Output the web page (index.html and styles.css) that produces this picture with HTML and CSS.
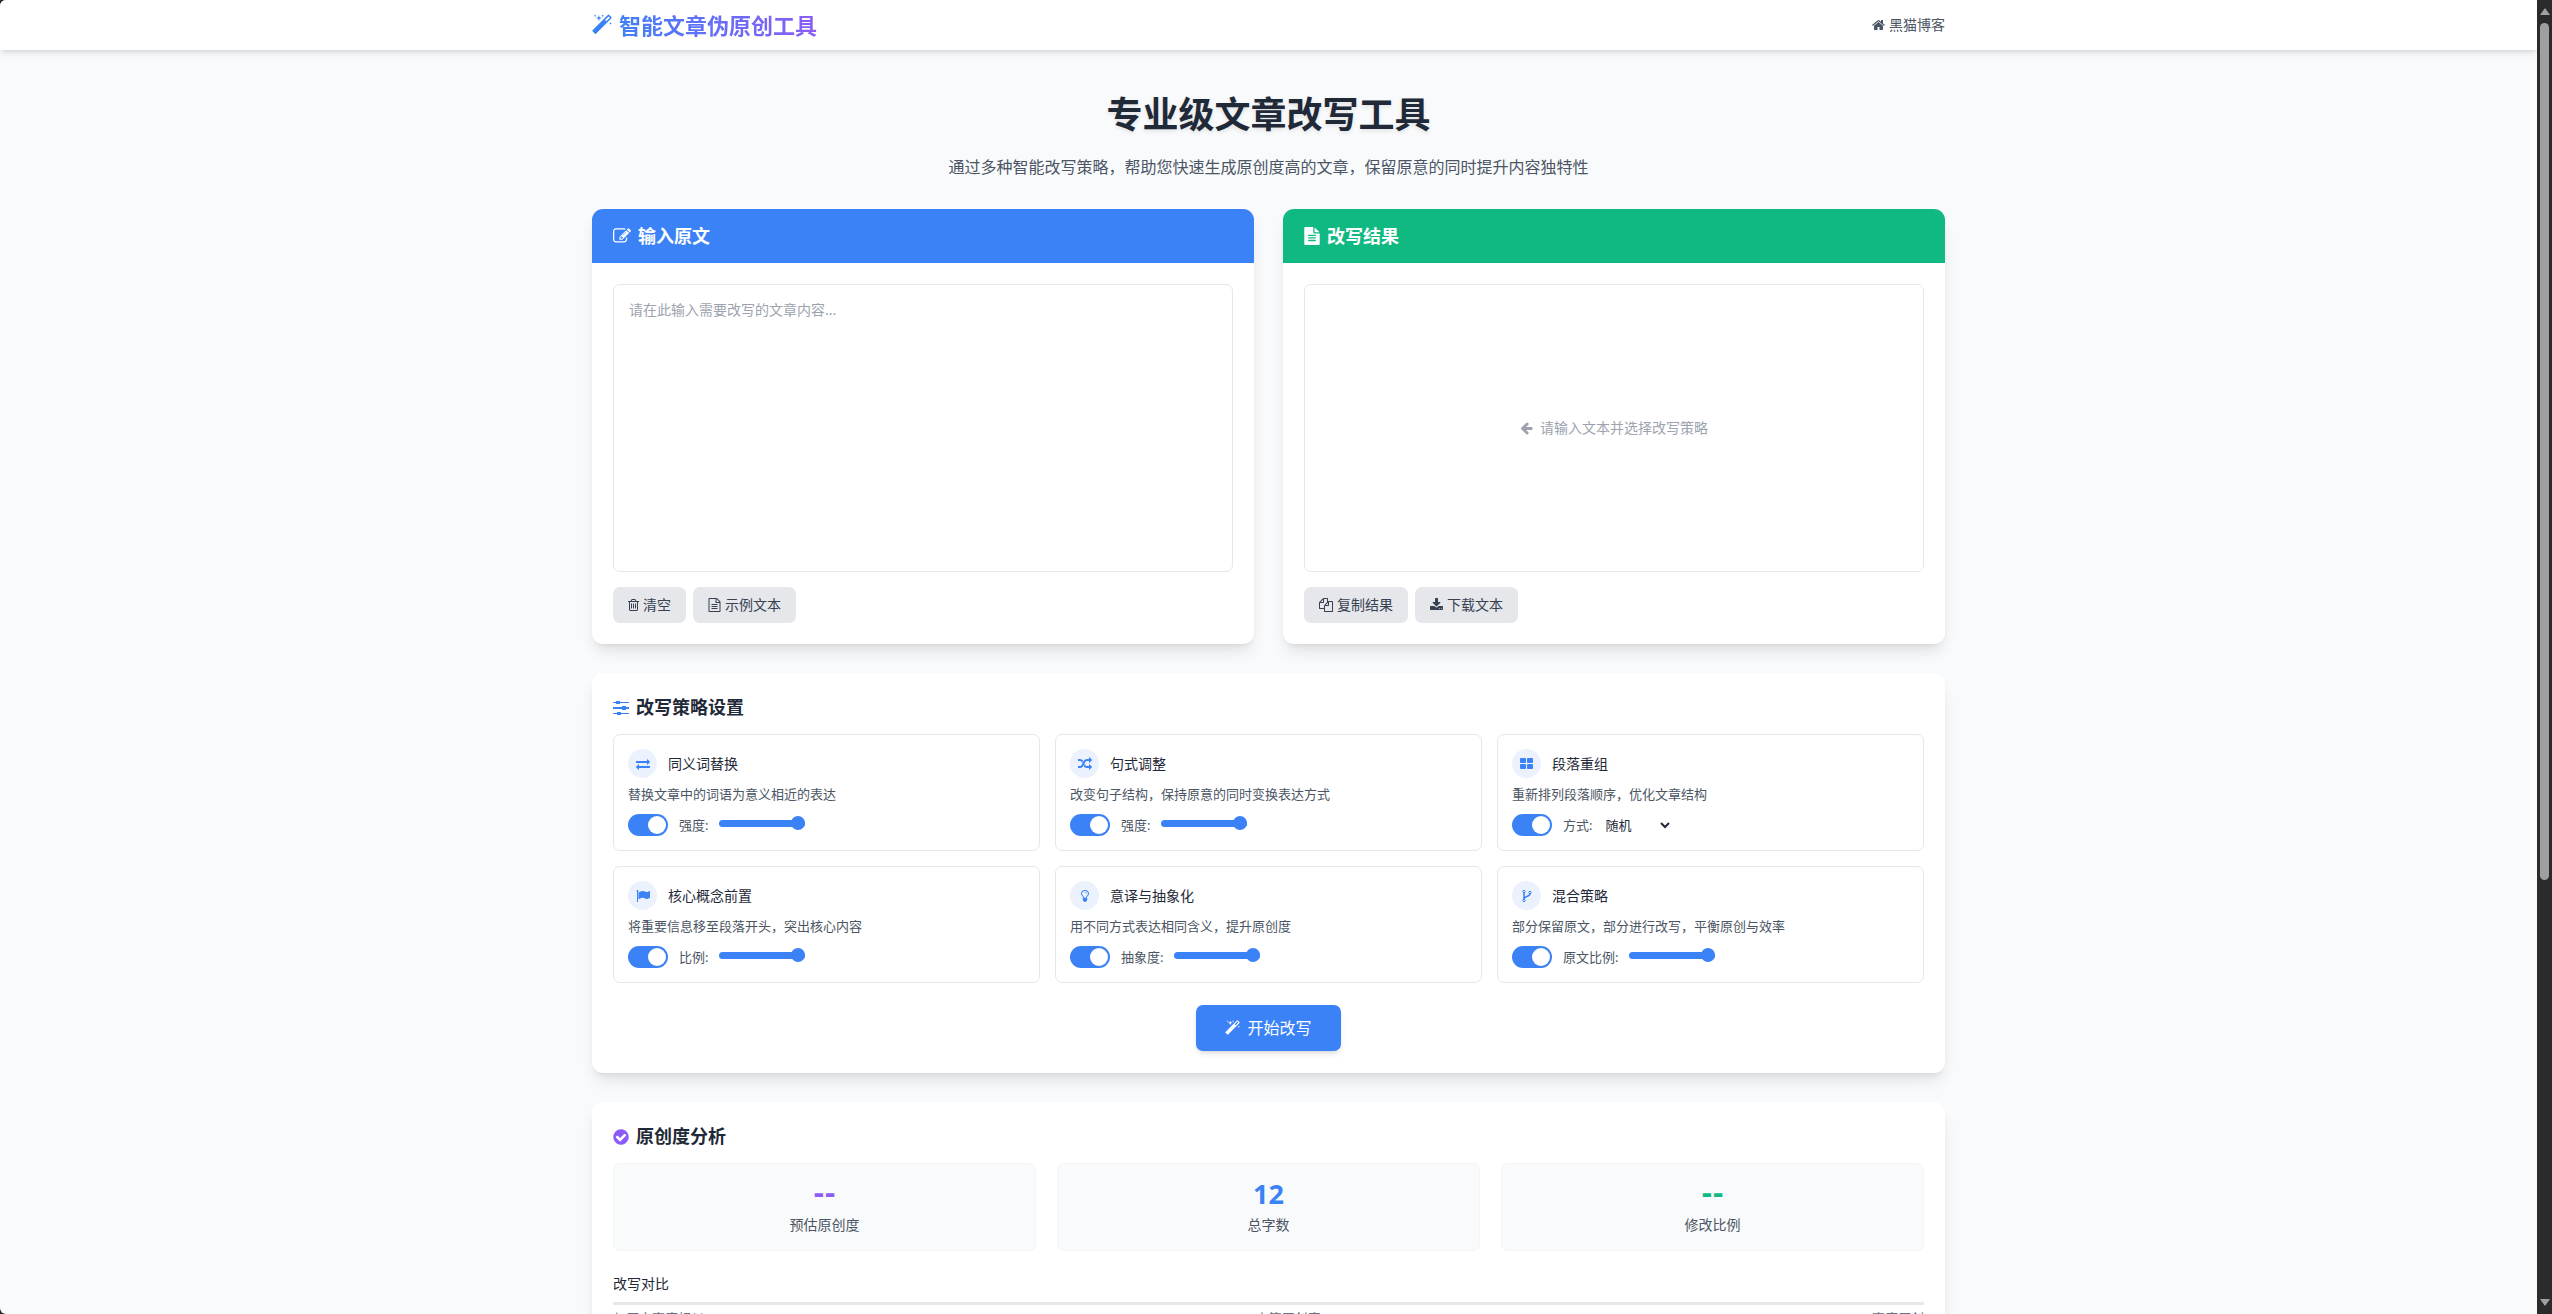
FILE: index.html
```html
<!DOCTYPE html>
<html lang="zh-CN">
<head>
<meta charset="UTF-8">
<meta name="viewport" content="width=device-width, initial-scale=1">
<title>智能文章伪原创工具</title>
<link rel="stylesheet" href="styles.css">
</head>
<body>
<svg class="sprite" aria-hidden="true">
  <defs>
    <symbol id="magic" viewBox="64 0 1664 1792"><path d="M1254 581l293-293-107-107-293 293zm447-293q0 27-18 45l-1286 1286q-18 18-45 18t-45-18l-198-198q-18-18-18-45t18-45l1286-1286q18-18 45-18t45 18l198 198q18 18 18 45zm-1351-190l98 30-98 30-30 98-30-98-98-30 98-30 30-98zm350 162l196 60-196 60-60 196-60-196-196-60 196-60 60-196zm930 478l98 30-98 30-30 98-30-98-98-30 98-30 30-98zm-640-640l98 30-98 30-30 98-30-98-98-30 98-30 30-98z"/></symbol>
    <symbol id="home" viewBox="64 0 1664 1792"><path d="M1472 992v480q0 26-19 45t-45 19h-384v-384h-256v384h-384q-26 0-45-19t-19-45v-480q0-1 .5-3t.5-3l575-474 575 474q1 2 1 6zm223-69l-62 74q-8 9-21 11h-3q-13 0-21-7l-692-577-692 577q-12 8-24 7-13-2-21-11l-62-74q-8-10-7-23.500t11-21.500l719-599q32-26 76-26t76 26l244 204v-195q0-14 9-23t23-9h192q14 0 23 9t9 23v408l219 182q10 8 11 21.500t-7 23.500z"/></symbol>
    <symbol id="edit" viewBox="0 0 1792 1792"><path d="M888 1184l116-116-152-152-116 116v56h96v96h56zm440-720q-16-16-33 1l-350 350q-17 17-1 33t33-1l350-350q17-17 1-33zm80 594v190q0 119-84.500 203.500t-203.500 84.500h-832q-119 0-203.500-84.500t-84.500-203.500v-832q0-119 84.500-203.500t203.500-84.500h832q63 0 117 25 15 7 18 23 3 17-9 29l-49 49q-14 14-32 8-23-6-45-6h-832q-66 0-113 47t-47 113v832q0 66 47 113t113 47h832q66 0 113-47t47-113v-126q0-13 9-22l64-64q15-15 35-7t20 29zm-96-738l288 288-672 672h-288v-288zm444 132l-92 92-288-288 92-92q28-28 68-28t68 28l152 152q28 28 28 68t-28 68z"/></symbol>
    <symbol id="file" viewBox="128 0 1536 1792"><path d="M1596 476q14 14 28 36h-472v-472q22 14 36 28zm-476 164h544v1056q0 40-28 68t-68 28h-1344q-40 0-68-28t-28-68v-1600q0-40 28-68t68-28h800v544q0 40 28 68t68 28zm160 736v-64q0-14-9-23t-23-9h-704q-14 0-23 9t-9 23v64q0 14 9 23t23 9h704q14 0 23-9t9-23zm0-256v-64q0-14-9-23t-23-9h-704q-14 0-23 9t-9 23v64q0 14 9 23t23 9h704q14 0 23-9t9-23zm0-256v-64q0-14-9-23t-23-9h-704q-14 0-23 9t-9 23v64q0 14 9 23t23 9h704q14 0 23-9t9-23z"/></symbol>
    <symbol id="file-o" viewBox="128 0 1536 1792"><path d="M1596 380q28 28 48 76t20 88v1152q0 40-28 68t-68 28h-1344q-40 0-68-28t-28-68v-1600q0-40 28-68t68-28h896q40 0 88 20t76 48zm-444-244v376h376q-10-29-22-41l-313-313q-12-12-41-22zm384 1528v-1024h-416q-40 0-68-28t-28-68v-416h-768v1536h1280zm-1024-864q0-14 9-23t23-9h704q14 0 23 9t9 23v64q0 14-9 23t-23 9h-704q-14 0-23-9t-9-23v-64zm736 224q14 0 23 9t9 23v64q0 14-9 23t-23 9h-704q-14 0-23-9t-9-23v-64q0-14 9-23t23-9h704zm0 256q14 0 23 9t9 23v64q0 14-9 23t-23 9h-704q-14 0-23-9t-9-23v-64q0-14 9-23t23-9h704z"/></symbol>
    <symbol id="trash" viewBox="192 0 1408 1792"><path d="M704 736v576q0 14-9 23t-23 9h-64q-14 0-23-9t-9-23v-576q0-14 9-23t23-9h64q14 0 23 9t9 23zm256 0v576q0 14-9 23t-23 9h-64q-14 0-23-9t-9-23v-576q0-14 9-23t23-9h64q14 0 23 9t9 23zm256 0v576q0 14-9 23t-23 9h-64q-14 0-23-9t-9-23v-576q0-14 9-23t23-9h64q14 0 23 9t9 23zm128 724v-948h-896v948q0 22 7 40.500t14.500 27 10.500 8.500h832q3 0 10.500-8.500t14.500-27 7-40.500zm-672-1076h448l-48-117q-7-9-17-11h-317q-10 2-17 11zm928 32v64q0 14-9 23t-23 9h-96v948q0 83-47 143.500t-113 60.500h-832q-66 0-113-58.500t-47-141.500v-952h-96q-14 0-23-9t-9-23v-64q0-14 9-23t23-9h309l70-167q15-37 54-63t79-26h320q40 0 79 26t54 63l70 167h309q14 0 23 9t9 23z"/></symbol>
    <symbol id="copy" viewBox="0 0 1792 1792"><path d="M1696 384q40 0 68 28t28 68v1216q0 40-28 68t-68 28h-960q-40 0-68-28t-28-68v-288h-544q-40 0-68-28t-28-68v-672q0-40 20-88t48-76l408-408q28-28 76-48t88-20h416q40 0 68 28t28 68v328q68-40 128-40h416zm-544 213l-299 299h299v-299zm-640-384l-299 299h299v-299zm196 647l316-316v-416h-384v416q0 40-28 68t-68 28h-416v640h512v-256q0-40 20-88t48-76zm956 804v-1152h-384v416q0 40-28 68t-68 28h-416v640h896z"/></symbol>
    <symbol id="download" viewBox="64 0 1664 1792"><path d="M1344 1344q0-26-19-45t-45-19-45 19-19 45 19 45 45 19 45-19 19-45zm256 0q0-26-19-45t-45-19-45 19-19 45 19 45 45 19 45-19 19-45zm128-224v320q0 40-28 68t-68 28h-1472q-40 0-68-28t-28-68v-320q0-40 28-68t68-28h465l135 136q58 56 136 56t136-56l136-136h464q40 0 68 28t28 68zm-325-569q17 41-14 70l-448 448q-18 19-45 19t-45-19l-448-448q-31-29-14-70 17-39 59-39h256v-448q0-26 19-45t45-19h256q26 0 45 19t19 45v448h256q42 0 59 39z"/></symbol>
    <symbol id="arrow-left" viewBox="128 0 1536 1792"><path d="M1664 896v128q0 53-32.500 90.500t-84.500 37.500h-704l293 294q38 36 38 90t-38 90l-75 76q-37 37-90 37-52 0-91-37l-651-652q-37-37-37-90 0-52 37-91l651-650q38-38 91-38 52 0 90 38l75 74q38 38 38 91t-38 91l-293 293h704q52 0 84.500 37.500t32.500 90.500z"/></symbol>
    <symbol id="sliders" viewBox="0 0 16 18"><path d="M0 3h3v1H0zM7 3h9v1H7zM3 2h4v3H3zM0 8h9v2H0zM13 8h3v2h-3zM9 7h4v4H9zM0 14h4v1H0zM8 14h8v1H8zM4 13h4v3H4z"/></symbol>
    <symbol id="exchange" viewBox="0 0 1792 1792"><path d="M1792 1184v192q0 13-9.500 22.500t-22.500 9.500h-1376v192q0 13-9.500 22.500t-22.500 9.500q-12 0-24-10l-319-320q-9-9-9-22 0-14 9-23l320-320q9-9 23-9 13 0 22.500 9.500t9.500 22.500v192h1376q13 0 22.500 9.500t9.500 22.500zm0-544q0 14-9 23l-320 320q-9 9-23 9-13 0-22.500-9.500t-9.500-22.500v-192h-1376q-13 0-22.500-9.500t-9.500-22.500v-192q0-13 9.500-22.500t22.500-9.500h1376v-192q0-14 9-23t23-9q12 0 24 10l319 319q9 9 9 23z"/></symbol>
    <symbol id="random" viewBox="0 0 1792 1792"><path d="M666 481q-60 92-137 273-22-45-37-72.500t-40.500-63.500-51-56.500-63-35-81.500-14.500h-224q-14 0-23-9t-9-23v-192q0-14 9-23t23-9h224q250 0 410 225zm1126 799q0 14-9 23l-320 320q-9 9-23 9-13 0-22.500-9.500t-9.500-22.500v-192q-32 0-85 .5t-81 1-73-1-71-5-64-10.500-63-18.500-58-28.500-59-40-55-53.500-56-69.500q59-93 136-273 22 45 37 72.500t40.500 63.500 51 56.500 63 35 81.500 14.500h256v-192q0-14 9-23t23-9q12 0 24 10l319 319q9 9 9 23zm0-896q0 14-9 23l-320 320q-9 9-23 9-13 0-22.500-9.500t-9.500-22.500v-192h-256q-48 0-87 15t-69 45-51 61.500-45 77.500q-32 62-78 171-29 66-49.500 111t-54 105-64 100-74 83-90 68.500-106.500 42-128 16.500h-224q-14 0-23-9t-9-23v-192q0-14 9-23t23-9h224q48 0 87-15t69-45 51-61.500 45-77.500q32-62 78-171 29-66 49.500-111t54-105 64-100 74-83 90-68.500 106.500-42 128-16.500h256v-192q0-14 9-23t23-9q12 0 24 10l319 319q9 9 9 23z"/></symbol>
    <symbol id="th-large" viewBox="0 0 14 14"><rect x="0" y="1" width="6" height="5" rx="1"/><rect x="7" y="1" width="6" height="5" rx="1"/><rect x="0" y="7" width="6" height="5" rx="1"/><rect x="7" y="7" width="6" height="5" rx="1"/></symbol>
    <symbol id="flag" viewBox="0 0 1792 1792"><path d="M320 256q0 72-64 110v1266q0 13-9.500 22.500t-22.500 9.500h-64q-13 0-22.500-9.500t-9.500-22.500v-1266q-64-38-64-110 0-53 37.500-90.500t90.500-37.500 90.500 37.500 37.500 90.500zm1472 64v763q0 25-12.500 38.500t-39.500 27.500q-215 116-369 116-61 0-123.500-22t-108.500-48-115.500-48-142.500-22q-192 0-464 146-17 9-33 9-26 0-45-19t-19-45v-742q0-32 31-55 21-14 79-43 236-120 421-120 107 0 200 29t219 88q38 19 88 19 54 0 117.500-21t110-47 88-47 54.500-21q26 0 45 19t19 45z"/></symbol>
    <symbol id="bulb" viewBox="0 0 1792 1792"><path d="M1120 576q0 13-9.500 22.500t-22.500 9.500-22.500-9.500-9.500-22.500q0-46-54-71t-106-25q-13 0-22.500-9.500t-9.500-22.500 9.500-22.500 22.500-9.500q50 0 99.500 16t87 54 37.500 90zm160 0q0-72-34.500-134t-90-101.500-123-62-136.500-22.500-136.500 22.500-123 62-90 101.500-34.500 134q0 101 68 180 10 11 30.500 33t30.500 33q128 153 141 298h228q13-145 141-298 10-11 30.500-33t30.500-33q68-79 68-180zm128 0q0 155-103 268-45 49-74.500 87t-59.500 95.500-34 107.500q47 28 47 82 0 37-25 64 25 27 25 64 0 52-45 81 13 23 13 47 0 46-31.500 71t-77.500 25q-20 44-60 70t-87 26-87-26-60-70q-46 0-77.500-25t-31.500-71q0-24 13-47-45-29-45-81 0-37 25-64-25-27-25-64 0-54 47-82-4-50-34-107.500t-59.500-95.500-74.500-87q-103-113-103-268 0-99 44.500-184.500t117-142 164-89 186.500-32.500 186.500 32.500 164 89 117 142 44.500 184.500z"/></symbol>
    <symbol id="fork" viewBox="0 0 14 14"><g fill="none" stroke="currentColor"><circle cx="4" cy="2.500" r="1.200"/><circle cx="4" cy="11.500" r="1.200"/><circle cx="10" cy="3.500" r="1.200"/><path stroke-width="1.600" d="M4 3.700v6.600M10 4.700c0 3.300-6 2.300-6 5.300"/></g></symbol>
    <symbol id="check" viewBox="128 0 1536 1792"><path d="M1412 734q0-28-18-46l-91-90q-19-19-45-19t-45 19l-408 407-226-226q-19-19-45-19t-45 19l-91 90q-18 18-18 46 0 27 18 45l362 362q19 19 45 19 27 0 46-19l543-543q18-18 18-45zm252 162q0 209-103 385.500t-279.500 279.500-385.500 103-385.500-103-279.500-279.500-103-385.500 103-385.500 279.500-279.500 385.500-103 385.500 103 279.500 279.500 103 385.500z"/></symbol>
    <symbol id="chevron" viewBox="0 0 10 10"><path d="M1 3l4 4 4-4" fill="none" stroke="currentColor" stroke-width="2"/></symbol>
  </defs>
</svg>
<div class="viewport">
  <div class="page">
    <header class="topbar">
      <div class="container topbar-row">
        <div class="brand"><svg class="icon-brand tint-blue"><use href="#magic"/></svg><span class="brand-name">智能文章伪原创工具</span></div>
        <nav><a class="nav-link" href="#"><svg class="icon-sm"><use href="#home"/></svg>黑猫博客</a></nav>
      </div>
    </header>
    <main class="container content">
      <section class="hero">
        <h1>专业级文章改写工具</h1>
        <p>通过多种智能改写策略，帮助您快速生成原创度高的文章，保留原意的同时提升内容独特性</p>
      </section>

      <div class="editors">
        <section class="card">
          <h2 class="card-head blue"><svg class="icon-wide"><use href="#edit"/></svg><label for="source">输入原文</label></h2>
          <div class="card-body">
            <textarea id="source" class="box" placeholder="请在此输入需要改写的文章内容..."></textarea>
            <div class="actions">
              <button type="button" class="btn"><svg class="icon-narrow"><use href="#trash"/></svg>清空</button>
              <button type="button" class="btn"><svg class="icon-sm"><use href="#file-o"/></svg>示例文本</button>
            </div>
          </div>
        </section>
        <section class="card">
          <h2 class="card-head green"><svg class="icon-md"><use href="#file"/></svg>改写结果</h2>
          <div class="card-body">
            <div class="box result"><svg class="icon-sm"><use href="#arrow-left"/></svg>请输入文本并选择改写策略</div>
            <div class="actions">
              <button type="button" class="btn"><svg class="icon-copy"><use href="#copy"/></svg>复制结果</button>
              <button type="button" class="btn"><svg class="icon-sm"><use href="#download"/></svg>下载文本</button>
            </div>
          </div>
        </section>
      </div>

      <section class="card panel">
        <h2 class="panel-title"><svg class="icon-md tint-blue"><use href="#sliders"/></svg>改写策略设置</h2>
        <div class="strategies">
          <article class="strategy">
            <h3><span class="badge"><svg><use href="#exchange"/></svg></span>同义词替换</h3>
            <p>替换文章中的词语为意义相近的表达</p>
            <div class="controls"><input class="toggle" type="checkbox" checked aria-label="同义词替换"><label for="r1">强度:</label><input id="r1" class="range" type="range" min="0" max="100" value="100"></div>
          </article>
          <article class="strategy">
            <h3><span class="badge"><svg><use href="#random"/></svg></span>句式调整</h3>
            <p>改变句子结构，保持原意的同时变换表达方式</p>
            <div class="controls"><input class="toggle" type="checkbox" checked aria-label="句式调整"><label for="r2">强度:</label><input id="r2" class="range" type="range" min="0" max="100" value="100"></div>
          </article>
          <article class="strategy">
            <h3><span class="badge"><svg><use href="#th-large"/></svg></span>段落重组</h3>
            <p>重新排列段落顺序，优化文章结构</p>
            <div class="controls"><input class="toggle" type="checkbox" checked aria-label="段落重组"><label for="mode">方式:</label><span class="select-wrap"><select id="mode"><option>随机</option></select><svg class="caret"><use href="#chevron"/></svg></span></div>
          </article>
          <article class="strategy">
            <h3><span class="badge"><svg><use href="#flag"/></svg></span>核心概念前置</h3>
            <p>将重要信息移至段落开头，突出核心内容</p>
            <div class="controls"><input class="toggle" type="checkbox" checked aria-label="核心概念前置"><label for="r4">比例:</label><input id="r4" class="range" type="range" min="0" max="100" value="100"></div>
          </article>
          <article class="strategy">
            <h3><span class="badge"><svg><use href="#bulb"/></svg></span>意译与抽象化</h3>
            <p>用不同方式表达相同含义，提升原创度</p>
            <div class="controls"><input class="toggle" type="checkbox" checked aria-label="意译与抽象化"><label for="r5">抽象度:</label><input id="r5" class="range" type="range" min="0" max="100" value="100"></div>
          </article>
          <article class="strategy">
            <h3><span class="badge"><svg><use href="#fork"/></svg></span>混合策略</h3>
            <p>部分保留原文，部分进行改写，平衡原创与效率</p>
            <div class="controls"><input class="toggle" type="checkbox" checked aria-label="混合策略"><label for="r6">原文比例:</label><input id="r6" class="range" type="range" min="0" max="100" value="100"></div>
          </article>
        </div>
        <button type="button" class="start"><svg class="icon-start"><use href="#magic"/></svg>开始改写</button>
      </section>

      <section class="card panel">
        <h2 class="panel-title"><svg class="icon-md tint-violet"><use href="#check"/></svg>原创度分析</h2>
        <div class="stats">
          <div class="stat"><strong class="pending tint-violet">--</strong><span>预估原创度</span></div>
          <div class="stat"><strong class="tint-blue">12</strong><span>总字数</span></div>
          <div class="stat"><strong class="pending tint-green">--</strong><span>修改比例</span></div>
        </div>
        <h3 class="compare-title">改写对比</h3>
        <div class="meter"></div>
        <div class="meter-labels"><span>与原文高度相似</span><span>中等原创度</span><span>高度原创</span></div>
      </section>
    </main>
  </div>
  <div class="scrollbar" aria-hidden="true">
    <span class="arrow up"></span><span class="thumb"></span><span class="arrow down"></span>
  </div>
</div>
</body>
</html>
```

FILE: styles.css
```css
* { box-sizing: border-box; margin: 0; padding: 0; }

body {
  background: #2b2b2b;
  color: #1f2937;
  font-family: "Noto Sans", "Noto Sans CJK SC", sans-serif;
  font-size: 14px;
  line-height: 22px;
}

button, input, select, textarea { font: inherit; color: inherit; }
svg { display: block; flex: none; fill: currentColor; }
.sprite { position: absolute; width: 0; height: 0; }

.viewport { display: grid; grid-template-columns: minmax(0, 1fr) 15px; height: 100vh; overflow: hidden; }
.page { overflow: hidden; background: #f9fafc; border-radius: 6px 0 0 6px; }
.container { max-width: 1381px; margin: 0 auto; padding: 0 14px; }

/* Top bar */
.topbar { background: #fff; padding: 11px 0; box-shadow: 0 4px 6px -1px rgb(0 0 0 / .1), 0 2px 4px -2px rgb(0 0 0 / .1); }
.topbar-row { display: flex; justify-content: space-between; align-items: center; }
.brand { display: flex; align-items: center; gap: 7px; font-size: 22px; font-weight: 700; line-height: 28px; }
.brand-name { background: linear-gradient(to right, #4180f6, #8b5cf6); -webkit-background-clip: text; background-clip: text; color: transparent; }
.nav-link { display: flex; align-items: center; gap: 4px; color: #4b5563; text-decoration: none; }

.icon-brand { width: 20px; height: 22px; }
.icon-wide { width: 18px; height: 18px; }
.icon-md { width: 16px; height: 18px; }
.icon-sm { width: 13px; height: 14px; }
.icon-narrow { width: 11px; height: 14px; }
.icon-copy { width: 14px; height: 14px; }
.icon-start { width: 15px; height: 16px; }

.tint-blue { color: #3b82f6; }
.tint-violet { color: #8b5cf6; }
.tint-green { color: #10b981; }

/* Intro */
.content { display: flex; flex-direction: column; gap: 29px; padding-top: 45px; }
.hero { text-align: center; }
.hero h1 { font-size: 36px; line-height: 40px; font-weight: 700; text-shadow: 0 2px 4px rgb(0 0 0 / .1); }
.hero p { margin-top: 20px; font-size: 16px; line-height: 25px; color: #4b5563; }

/* Cards */
.card { background: #fff; border-radius: 11px; box-shadow: 0 10px 15px -3px rgb(0 0 0 / .1), 0 4px 6px -4px rgb(0 0 0 / .1); }
.editors { display: grid; grid-template-columns: 1fr 1fr; gap: 29px; }
.card-head { display: flex; align-items: center; gap: 7px; padding: 14px 21px; border-radius: 11px 11px 0 0; color: #fff; font-size: 18px; line-height: 26px; font-weight: 700; }
.blue { background: #3b82f6; }
.green { background: #10b981; }
.card-body { padding: 21px; }
.box { display: block; width: 100%; height: 288px; padding: 14px 15px; border: 1px solid #e5e7eb; border-radius: 7px; background: #fff; resize: none; outline: 0; }
.box::placeholder { color: #9ca3af; opacity: 1; }
.result { display: flex; align-items: center; justify-content: center; gap: 7px; color: #9ca3af; }
.actions { display: flex; gap: 7px; margin-top: 15px; }
.btn { display: flex; align-items: center; gap: 4px; height: 36px; padding: 0 15px; border: 0; border-radius: 7px; background: #e5e7eb; color: #374151; }

/* Strategy settings */
.panel { padding: 21px 21px 22px; }
.panel-title { display: flex; align-items: center; gap: 7px; margin-bottom: 13px; font-size: 18px; line-height: 27px; font-weight: 700; }
.strategies { display: grid; grid-template-columns: repeat(3, 1fr); gap: 15px; }
.strategy { padding: 14px; border: 1px solid #e5e7eb; border-radius: 7px; }
.strategy h3 { display: flex; align-items: center; gap: 11px; font-size: 14px; line-height: 29px; font-weight: 400; }
.badge { display: grid; place-items: center; width: 29px; height: 29px; border-radius: 50%; background: #ebf2fe; color: #3b82f6; }
.badge svg { width: 14px; height: 14px; }
.strategy p { margin: 7px 0 11px; font-size: 13px; line-height: 18px; color: #4b5563; }
.controls { display: flex; align-items: center; height: 22px; font-size: 13px; color: #4b5563; }
.controls label { margin: 0 11px; }

.toggle { appearance: none; display: flex; width: 40px; height: 22px; padding: 2px; border-radius: 11px; background: #d1d5db; }
.toggle::before { content: ""; width: 18px; height: 18px; border-radius: 50%; background: #fff; }
.toggle:checked { justify-content: flex-end; background: #3b82f6; }

.range { appearance: none; align-self: flex-start; width: 86px; height: 18px; background: transparent; }
.range::-webkit-slider-runnable-track { height: 7px; border-radius: 4px; background: #3b82f6; }
.range::-webkit-slider-thumb { appearance: none; width: 14px; height: 14px; margin-top: -4px; border-radius: 50%; background: #3b82f6; }

.select-wrap { display: grid; grid-template-columns: 67px; align-items: center; }
.select-wrap > * { grid-area: 1 / 1; }
.select-wrap select { appearance: none; width: 67px; padding-left: 2px; border: 0; background: transparent; color: #1f2937; line-height: 18px; }
.caret { justify-self: end; width: 10px; height: 10px; pointer-events: none; color: #1f2937; }

.start { display: flex; align-items: center; gap: 7px; height: 46px; margin: 22px auto 0; padding: 0 29px; border: 0; border-radius: 7px; background: #3b82f6; color: #fff; font-size: 16px; box-shadow: 0 4px 6px -1px rgb(0 0 0 / .1), 0 2px 4px -2px rgb(0 0 0 / .1); }

/* Originality analysis */
.stats { display: grid; grid-template-columns: repeat(3, 1fr); gap: 21px; }
.stat { display: flex; flex-direction: column; align-items: center; gap: 4px; padding: 14px; border: 1px solid #f3f4f6; border-radius: 7px; background: #f9fafc; color: #4b5563; }
.stat strong { font-size: 27px; line-height: 32px; font-weight: 700; }
.stat .pending { font-family: "DejaVu Sans", sans-serif; }
.compare-title { margin: 22px 0 7px; font-size: 14px; font-weight: 400; }
.meter { height: 3px; border-radius: 2px; background: #e5e7eb; }
.meter-labels { display: flex; justify-content: space-between; margin-top: 4px; font-size: 13px; line-height: 18px; color: #6b7280; }

/* Scroll bar */
.scrollbar { display: flex; flex-direction: column; align-items: center; padding: 8px 0; }
.arrow { border: 5px solid transparent; border-top-width: 0; border-bottom: 7px solid #a0a0a0; }
.down { margin-top: auto; border-top: 7px solid #a0a0a0; border-bottom-width: 0; }
.thumb { width: 9px; height: 66%; margin-top: 8px; border-radius: 5px; background: #9f9f9f; }
```
